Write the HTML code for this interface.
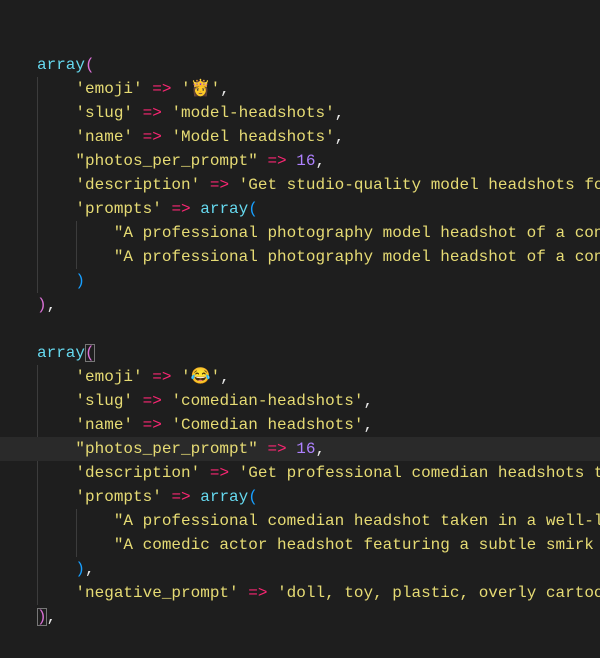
<!DOCTYPE html>
<html><head><meta charset="utf-8"><style>
html,body{margin:0;padding:0;background:#1e1e1e;width:600px;height:658px;overflow:hidden}
.c{position:absolute;left:0;top:53px;width:600px;font-family:"Liberation Mono","DejaVu Sans Mono",monospace;font-size:16px;line-height:24px;color:#e8e6d8}
.l{height:24px;padding-left:37px;position:relative;white-space:pre;overflow:hidden}
.hl{background:#2a2a2a}
.s{color:#e6db74}.k{color:#f92672}.n{color:#ae81ff}.f{color:#66d9ef}.p{color:#da70d6}.b{color:#179fff}.w{color:#e8e8e8}
.g{position:absolute;width:1px;background:#3c3c3c}
.box{outline:1px solid #777;outline-offset:-1px}
</style></head><body>
<div class="g" style="left:37px;top:77px;height:216px"></div>
<div class="g" style="left:76px;top:221px;height:48px"></div>
<div class="g" style="left:37px;top:365px;height:240px"></div>
<div class="g" style="left:76px;top:509px;height:48px"></div>
<div class="c">
<div class="l"><span class="f">array</span><span class="p">(</span></div>
<div class="l">    <span class="s">'emoji'</span> <span class="k">=&gt;</span> <span class="s">'👸'</span><span class="w">,</span></div>
<div class="l">    <span class="s">'slug'</span> <span class="k">=&gt;</span> <span class="s">'model-headshots'</span><span class="w">,</span></div>
<div class="l">    <span class="s">'name'</span> <span class="k">=&gt;</span> <span class="s">'Model headshots'</span><span class="w">,</span></div>
<div class="l">    <span class="s">"photos_per_prompt"</span> <span class="k">=&gt;</span> <span class="n">16</span><span class="w">,</span></div>
<div class="l">    <span class="s">'description'</span> <span class="k">=&gt;</span> <span class="s">'Get studio-quality model headshots for your portfolio</span></div>
<div class="l">    <span class="s">'prompts'</span> <span class="k">=&gt;</span> <span class="f">array</span><span class="b">(</span></div>
<div class="l">        <span class="s">"A professional photography model headshot of a confident</span></div>
<div class="l">        <span class="s">"A professional photography model headshot of a confident</span></div>
<div class="l">    <span class="b">)</span></div>
<div class="l"><span class="p">)</span><span class="w">,</span></div>
<div class="l"></div>
<div class="l"><span class="f">array</span><span class="p box">(</span></div>
<div class="l">    <span class="s">'emoji'</span> <span class="k">=&gt;</span> <span class="s">'😂'</span><span class="w">,</span></div>
<div class="l">    <span class="s">'slug'</span> <span class="k">=&gt;</span> <span class="s">'comedian-headshots'</span><span class="w">,</span></div>
<div class="l">    <span class="s">'name'</span> <span class="k">=&gt;</span> <span class="s">'Comedian headshots'</span><span class="w">,</span></div>
<div class="l hl">    <span class="s">"photos_per_prompt"</span> <span class="k">=&gt;</span> <span class="n">16</span><span class="w">,</span></div>
<div class="l">    <span class="s">'description'</span> <span class="k">=&gt;</span> <span class="s">'Get professional comedian headshots that stand out</span></div>
<div class="l">    <span class="s">'prompts'</span> <span class="k">=&gt;</span> <span class="f">array</span><span class="b">(</span></div>
<div class="l">        <span class="s">"A professional comedian headshot taken in a well-lit studio</span></div>
<div class="l">        <span class="s">"A comedic actor headshot featuring a subtle smirk and raised</span></div>
<div class="l">    <span class="b">)</span><span class="w">,</span></div>
<div class="l">    <span class="s">'negative_prompt'</span> <span class="k">=&gt;</span> <span class="s">'doll, toy, plastic, overly cartoonish</span></div>
<div class="l"><span class="p box">)</span><span class="w">,</span></div>
</div>
</body></html>
